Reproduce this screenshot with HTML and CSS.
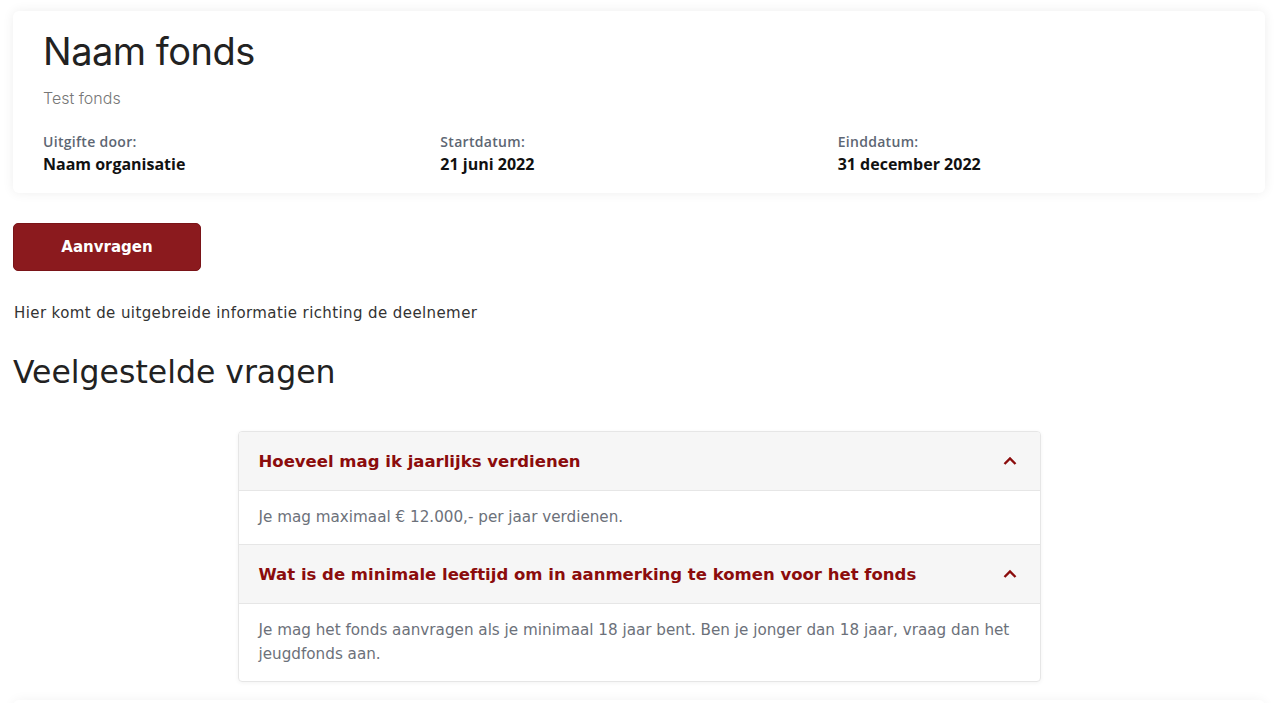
FILE: index.html
```html
<!DOCTYPE html>
<html lang="nl">
<head>
  <meta charset="UTF-8">
  <title>Naam fonds</title>
  <link rel="stylesheet" href="styles.css">
</head>
<body>
  <div class="page">
    <div class="fund-card">
      <h1>Naam fonds</h1>
      <p class="fund-desc">Test fonds</p>
      <div class="fund-meta">
        <div>
          <span class="meta-label">Uitgifte door:</span>
          <span class="meta-value">Naam organisatie</span>
        </div>
        <div>
          <span class="meta-label">Startdatum:</span>
          <span class="meta-value">21 juni 2022</span>
        </div>
        <div>
          <span class="meta-label">Einddatum:</span>
          <span class="meta-value">31 december 2022</span>
        </div>
      </div>
    </div>

    <button class="btn-apply">Aanvragen</button>

    <p class="info">Hier komt de uitgebreide informatie richting de deelnemer</p>

    <h2>Veelgestelde vragen</h2>

    <div class="faq">
      <div class="faq-item">
        <div class="faq-question">
          <span>Hoeveel mag ik jaarlijks verdienen</span>
          <svg class="chevron" width="16" height="16" viewBox="0 0 16 16"><path d="M2.5 11 L8 5.5 L13.5 11" fill="none" stroke="currentColor" stroke-width="2.4"/></svg>
        </div>
        <div class="faq-answer">Je mag maximaal € 12.000,- per jaar verdienen.</div>
      </div>
      <div class="faq-item">
        <div class="faq-question">
          <span>Wat is de minimale leeftijd om in aanmerking te komen voor het fonds</span>
          <svg class="chevron" width="16" height="16" viewBox="0 0 16 16"><path d="M2.5 11 L8 5.5 L13.5 11" fill="none" stroke="currentColor" stroke-width="2.4"/></svg>
        </div>
        <div class="faq-answer">Je mag het fonds aanvragen als je minimaal 18 jaar bent. Ben je jonger dan 18 jaar, vraag dan het jeugdfonds aan.</div>
      </div>
    </div>

    <div class="footer-card"></div>
  </div>
</body>
</html>
```

FILE: styles.css
```css
body {
  margin: 0;
  background-color: #ffffff;
  font-family: 'DejaVu Sans', sans-serif;
  color: #333;
}

.page {
  padding: 11px 15px 0 13px;
}

.fund-card {
  background-color: #fff;
  border-radius: 6px;
  box-shadow: 0 0 12px rgba(0,0,0,0.07);
  padding: 17px 30px 18px 30px;
}

.fund-card h1 {
  font-family: 'Inter', sans-serif;
  font-weight: 400;
  font-size: 38px;
  color: #222;
  margin: 0;
  line-height: 46px;
  letter-spacing: -0.5px;
}

.fund-desc {
  font-family: 'Inter', sans-serif;
  font-weight: 300;
  font-size: 16px;
  color: #777;
  margin: 14px 0 25px;
}

.fund-meta {
  display: grid;
  grid-template-columns: 1fr 1fr 1fr;
}

.meta-label {
  display: block;
  font-family: 'Open Sans', sans-serif;
  font-weight: 600;
  font-size: 14px;
  letter-spacing: 0.3px;
  color: #5d6673;
  line-height: 18px;
}

.meta-value {
  display: block;
  font-family: 'Open Sans', sans-serif;
  font-weight: 700;
  font-size: 16px;
  color: #111;
  margin-top: 2px;
  line-height: 22px;
}

.btn-apply {
  display: block;
  margin-top: 30px;
  width: 188px;
  height: 48px;
  background-color: #8b1a1e;
  border: 1px solid #7a1418;
  border-radius: 5px;
  color: #fff;
  font-family: 'DejaVu Sans', sans-serif;
  font-weight: bold;
  font-size: 15px;
  cursor: pointer;
}

.info {
  margin: 32px 0 0 1px;
  font-size: 15px;
  letter-spacing: 0.4px;
  color: #333;
  line-height: 20px;
}

h2 {
  font-weight: 400;
  font-size: 31.5px;
  color: #222;
  margin: 29px 0 0 0;
  line-height: 40px;
}

.faq {
  width: 801px;
  margin: 39px auto 0;
  border: 1px solid #e6e6e6;
  border-radius: 4px;
  box-shadow: 0 1px 4px rgba(0,0,0,0.05);
  overflow: hidden;
}

.faq-question {
  display: flex;
  justify-content: space-between;
  align-items: center;
  background-color: #f6f6f6;
  padding: 0 22px 0 20px;
  height: 58px;
  border-bottom: 1px solid #e6e6e6;
  color: #8b0c0c;
  font-weight: bold;
  font-size: 16.5px;
}

.faq-item + .faq-item .faq-question {
  border-top: 1px solid #e6e6e6;
}

.chevron {
  color: #8b0c0c;
}

.faq-answer {
  padding: 14px 20px 15px;
  font-size: 15.2px;
  color: #6c717a;
  line-height: 24px;
}

.footer-card {
  margin-top: 18px;
  height: 40px;
  border-radius: 6px;
  box-shadow: 0 0 12px rgba(0,0,0,0.05);
}
```
